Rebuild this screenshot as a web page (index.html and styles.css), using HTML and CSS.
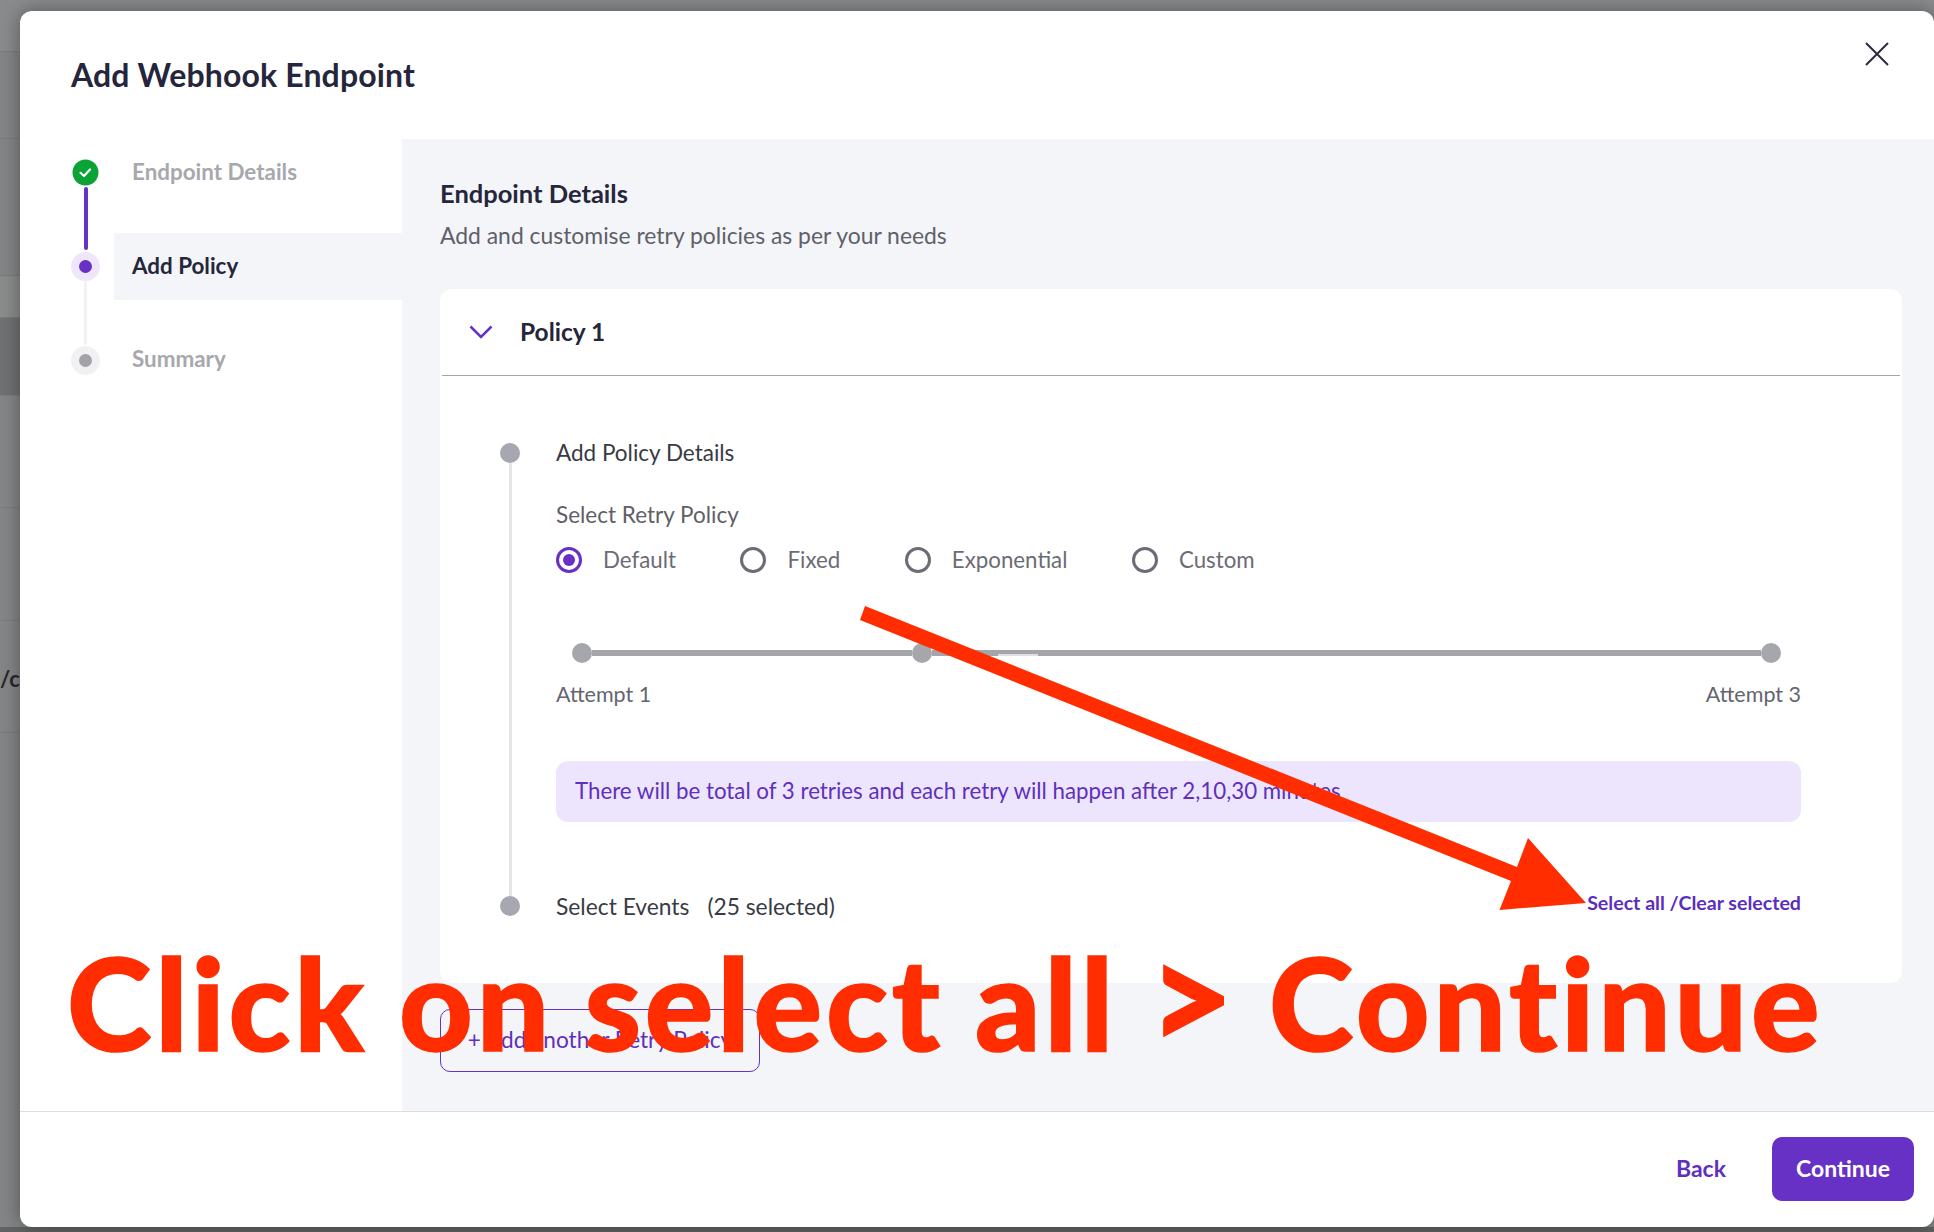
FILE: index.html
```html
<!DOCTYPE html>
<html lang="en">
<head>
<meta charset="utf-8">
<title>Add Webhook Endpoint</title>
<link rel="stylesheet" href="styles.css">
</head>
<body>
<div class="backdrop">
  <div class="band band-a"></div>
  <div class="band band-b"></div>
  <div class="band band-c"></div>
  <div class="band band-d"></div>
  <div class="band band-e"></div>
  <div class="band band-f"></div>
  <div class="band band-g"></div>
  <div class="band band-h"><span class="band-text">/ca</span></div>
  <div class="band band-i"></div>
  <div class="band band-j"></div>
</div>

<div class="modal">
  <header class="modal-head">
    <h1 class="modal-title">Add Webhook Endpoint</h1>
    <svg class="close" width="24" height="24" viewBox="0 0 24 24"><path d="M1 1 23 23M23 1 1 23" fill="none" stroke="#2a2b3e" stroke-width="2"/></svg>
  </header>

  <div class="modal-body">
    <nav class="steps">
      <div class="step step-done">
        <div class="rail">
          <svg width="29" height="29" viewBox="0 0 29 29"><circle cx="14.5" cy="14.5" r="13" fill="#0ba336"/><path d="M9.5 14.8 13 18l6-6.5" fill="none" stroke="#fff" stroke-width="2.2" stroke-linecap="round" stroke-linejoin="round"/></svg>
        </div>
        <div class="step-label">Endpoint Details</div>
      </div>
      <div class="step step-current">
        <div class="rail">
          <svg width="29" height="29" viewBox="0 0 29 29"><circle cx="14.5" cy="14.5" r="14.5" fill="#efe6fb"/><circle cx="14.5" cy="14.5" r="6.5" fill="#6631c4"/></svg>
        </div>
        <div class="step-label">Add Policy</div>
      </div>
      <div class="step step-todo">
        <div class="rail">
          <svg width="29" height="29" viewBox="0 0 29 29"><circle cx="14.5" cy="14.5" r="14.5" fill="#f1f1f3"/><circle cx="14.5" cy="14.5" r="6.5" fill="#a2a2a8"/></svg>
        </div>
        <div class="step-label">Summary</div>
      </div>
    </nav>

    <main class="main">
      <h2 class="main-title">Endpoint Details</h2>
      <p class="main-sub">Add and customise retry policies as per your needs</p>

      <section class="card">
        <div class="card-head">
          <svg class="chevron" width="24" height="14" viewBox="0 0 24 14"><path d="M1.5 1.5 12 12 22.500 1.500" fill="none" stroke="#6631c4" stroke-width="2.500"/></svg>
          <span class="card-title">Policy 1</span>
        </div>
        <div class="card-body">
          <div class="timeline">
            <span class="t-dot"></span>
            <span class="t-line"></span>
            <span class="t-dot"></span>
          </div>
          <div class="content">
            <div class="row-title">Add Policy Details</div>
            <div class="field-label">Select Retry Policy</div>
            <div class="radios">
              <label class="radio radio-on"><span class="radio-mark"></span><span class="radio-text">Default</span></label>
              <label class="radio"><span class="radio-mark"></span><span class="radio-text">Fixed</span></label>
              <label class="radio"><span class="radio-mark"></span><span class="radio-text">Exponential</span></label>
              <label class="radio"><span class="radio-mark"></span><span class="radio-text">Custom</span></label>
            </div>
            <div class="slider">
              <span class="knob"></span>
              <span class="bar bar-first"></span>
              <span class="knob"></span>
              <span class="bar bar-rest"></span>
              <span class="knob"></span>
            </div>
            <div class="attempts"><span>Attempt 1</span><span>Attempt 3</span></div>
            <div class="notice">There will be total of 3 retries and each retry will happen after 2,10,30 minutes</div>
            <div class="events">
              <div class="events-title"><span>Select Events</span><span>(25 selected)</span></div>
              <a class="events-link">Select all /Clear selected</a>
            </div>
          </div>
        </div>
      </section>

      <button class="add-btn">+ Add another Retry Policy</button>
    </main>
  </div>

  <footer class="modal-foot">
    <a class="back">Back</a>
    <button class="continue">Continue</button>
  </footer>
</div>

<div class="annotation">
  <svg class="arrow" width="1934" height="1232" viewBox="0 0 1934 1232"><polygon points="865,606 1517,867 1528,838 1586,903 1499.500,910 1511,881 860,620" fill="#ff2d00"/></svg>
  <div class="shout">Click on select all <span class="shout-gt">&gt;</span> Continue</div>
</div>
</body>
</html>
```
FILE: styles.css
```css
* { box-sizing: border-box; }
html, body { margin: 0; padding: 0; }
body {
  width: 1934px;
  height: 1232px;
  overflow: hidden;
  position: relative;
  font-family: "Lato", "Liberation Sans", sans-serif;
  background: #868789;
}

/* dimmed page behind the modal */
.backdrop { display: flex; flex-direction: column; height: 1232px; }
.band { border-bottom: 1px solid #7b7c7e; background: #87888a; flex: none; }
.band-a { height: 52px; background: #8a8b8d; }
.band-b { height: 87px; background: #848587; }
.band-c { height: 137px; background: #848587; }
.band-d { height: 42px; background: #8b8c8c; }
.band-e { height: 78px; background: #717274; }
.band-f { height: 112px; background: #858687; }
.band-g { height: 113px; background: #858687; }
.band-h { height: 112px; background: #858687; padding-top: 44px; }
.band-i { flex: 1; background: #848586; border-bottom: 0; }
.band-j { height: 5px; background: #626364; border-bottom: 0; }
.band-text { font-size: 22px; font-weight: 700; color: #26262c; }

/* modal */
.modal {
  position: absolute;
  left: 20px;
  top: 11px;
  width: 1914px;
  height: 1216px;
  display: flex;
  flex-direction: column;
  background: #fff;
  border-radius: 12px;
  overflow: hidden;
  box-shadow: 0 0 20px rgba(0, 0, 0, .38);
}
.modal-head {
  height: 128px;
  flex: none;
  display: flex;
  justify-content: space-between;
  padding: 0 45px 0 51px;
}
.modal-title {
  margin: 46px 0 0;
  font-size: 32px;
  line-height: 36px;
  letter-spacing: .15px;
  font-weight: 700;
  color: #25263b;
}
.close { margin-top: 31px; }

.modal-body { flex: 1; display: flex; min-height: 0; }

/* steps */
.steps {
  width: 382px;
  flex: none;
  display: flex;
  flex-direction: column;
  gap: 27px;
}
.step { display: flex; height: 67px; position: relative; }
.rail {
  width: 94px;
  flex: none;
  padding-left: 51px;
  display: flex;
  align-items: center;
}
.step-label {
  flex: 1;
  padding: 0 0 2px 18px;
  display: flex;
  align-items: center;
  font-size: 22.4px;
  font-weight: 700;
  color: #a7a8ad;
}
.step-todo .step-label { padding-bottom: 4px; }
.step-current .step-label { background: #f3f5f9; color: #25263b; }
.step-done::after,
.step-current::after {
  content: "";
  position: absolute;
  left: 64px;
  width: 4px;
  top: 48px;
  height: 63px;
  border-radius: 2px;
  background: #6631c4;
}
.step-current::after { background: #f1f1f3; left: 64px; width: 3px; top: 48px; height: 64px; }

/* main */
.main {
  flex: 1;
  min-width: 0;
  background: #f3f5f9;
  padding: 39px 32px 0 38px;
}
.main-title {
  margin: 0;
  font-size: 25.500px;
  line-height: 30px;
  font-weight: 700;
  color: #25263b;
}
.main-sub {
  margin: 14px 0 41px;
  font-size: 22.900px;
  line-height: 26px;
  color: #5f6068;
}
.card { background: #fff; border-radius: 12px; height: 694px; }
.card-head {
  height: 87px;
  margin: 0 2px;
  padding: 0 0 2px 27px;
  display: flex;
  align-items: center;
  gap: 27px;
  border-bottom: 1.5px solid #a5a5a8;
}
.chevron { margin-top: 2px; }
.card-title { font-size: 24.500px; font-weight: 700; color: #25263b; }
.card-body { display: flex; padding: 67px 101px 66px 60px; }

.timeline {
  width: 20px;
  flex: none;
  margin-right: 36px;
  display: flex;
  flex-direction: column;
  align-items: center;
}
.t-dot { width: 20px; height: 20px; border-radius: 50%; background: #a6a7b1; flex: none; }
.t-line { width: 3px; flex: 1; background: #e4e5e9; }

.content { flex: 1; min-width: 0; }
.row-title { height: 20px; line-height: 20px; font-size: 22.500px; color: #393a44; }
.field-label { margin-top: 38px; line-height: 28px; font-size: 22.500px; color: #5f6068; }
.radios { margin-top: 18px; display: flex; gap: 64.500px; }
.radio {
  display: flex;
  align-items: center;
  gap: 22px;
  height: 26px;
  font-size: 22.300px;
  color: #6b6c74;
}
.radio-text { margin-top: -2px; margin-left: -1px; }
.radio-mark {
  width: 26px;
  height: 26px;
  border-radius: 50%;
  border: 3px solid #6b6c76;
  display: flex;
  align-items: center;
  justify-content: center;
  flex: none;
}
.radio-on .radio-mark { border-color: #6631c4; }
.radio-on .radio-mark::before {
  content: "";
  width: 12px;
  height: 12px;
  border-radius: 50%;
  background: #6631c4;
}
.slider { margin: 70px 20px 0 16px; display: flex; align-items: center; }
.knob { width: 20px; height: 20px; border-radius: 50%; background: #a6a7ad; flex: none; }
.bar { height: 6px; background: #a4a5aa; }
.bar-first { width: 320px; flex: none; }
.bar-rest {
  flex: 1;
  background:
    linear-gradient(#dfe0e3, #dfe0e3) 66px 4px / 40px 2px no-repeat,
    #a4a5aa;
}
.attempts {
  margin-top: 19px;
  display: flex;
  justify-content: space-between;
  line-height: 24px;
  font-size: 21.500px;
  color: #64656e;
}
.notice {
  margin-top: 55px;
  height: 61px;
  padding: 0 0 3px 19px;
  display: flex;
  align-items: center;
  background: #ede5fd;
  border-radius: 12px;
  font-size: 22.300px;
  color: #5f2fbd;
}
.events {
  margin-top: 74px;
  height: 20px;
  display: flex;
  justify-content: space-between;
  align-items: center;
}
.events-title { display: flex; gap: 18px; font-size: 22.800px; line-height: 20px; color: #393a44; }
.events-link { font-size: 19.600px; line-height: 20px; font-weight: 700; color: #5b2fbd; margin-top: -6px; }

.add-btn {
  display: block;
  margin-top: 26px;
  width: 320px;
  height: 63px;
  padding: 0 0 2px;
  text-align: center;
  background: transparent;
  border: 1px solid #6631c4;
  border-radius: 10px;
  font-family: inherit;
  font-size: 22.600px;
  color: #5f2fbd;
}

/* footer */
.modal-foot {
  height: 116px;
  flex: none;
  border-top: 1px solid #dcdde0;
  padding: 0 20px 1px 0;
  display: flex;
  justify-content: flex-end;
  align-items: center;
  gap: 46px;
}
.back { font-size: 23px; font-weight: 700; color: #5f2fbd; line-height: 24px; margin-top: -3px; }
.continue {
  width: 142px;
  height: 64px;
  padding: 0 0 3px;
  background: #6631c4;
  color: #fff;
  border: 0;
  border-radius: 10px;
  font-family: inherit;
  font-size: 23px;
  font-weight: 700;
}

/* red annotation drawn over the screenshot */
.annotation { position: absolute; inset: 0; pointer-events: none; }
.arrow { position: absolute; left: 0; top: 0; }
.shout {
  position: absolute;
  left: 67px;
  top: 932px;
  font-size: 128px;
  line-height: 140px;
  font-weight: 900;
  color: #ff2d00;
  white-space: nowrap;
  letter-spacing: 3.800px;
  word-spacing: -3px;
  -webkit-text-stroke: 1.500px #ff2d00;
}
.shout-gt { font-size: 148px; line-height: 0; }
```
